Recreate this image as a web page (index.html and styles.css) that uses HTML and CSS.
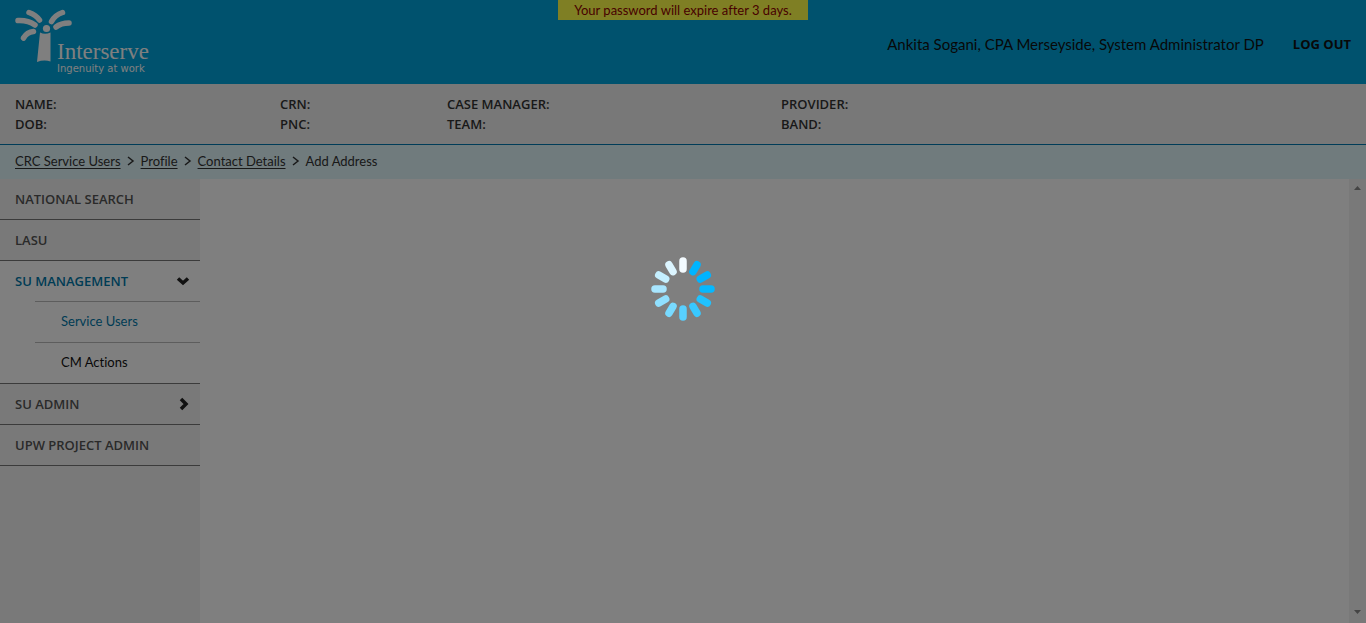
FILE: index.html
```html
<!DOCTYPE html>
<html lang="en">
<head>
<meta charset="utf-8">
<meta name="viewport" content="width=device-width, initial-scale=1">
<title>Add Address</title>
<link rel="stylesheet" href="styles.css">
</head>
<body>
<div class="app">
  <header class="header">
    <a class="logo" href="#" aria-label="Interserve home">
      <svg class="logo-art" viewBox="0 0 140 68" aria-hidden="true">
        <g fill="none" stroke="currentColor" stroke-width="5.5" stroke-linecap="round">
          <path d="M14 4.500Q21 7 24.500 12"/>
          <path d="M3 12.500Q13 12 20 17"/>
          <path d="M8.500 30Q12 24 18.500 23.500"/>
          <path d="M36.500 13.500Q40 7 47.500 4.500"/>
          <path d="M41 19Q46 15 54 15"/>
        </g>
        <circle cx="31.500" cy="20.500" r="3.600" fill="currentColor"/>
        <path d="M25 24.500Q30 27 35.500 24.500V53.500Q29 51.500 22 54Z" fill="currentColor"/>
        <text class="logo-name" x="42" y="51">Interserve</text>
        <text class="logo-tag" x="42" y="64">Ingenuity at work</text>
      </svg>
    </a>
    <div class="notice" role="status">Your password will expire after 3 days.</div>
    <div class="account">
      <span>Ankita Sogani, CPA Merseyside, System Administrator DP</span>
      <button class="logout" type="button">LOG OUT</button>
    </div>
  </header>

  <section class="summary" aria-label="Service user">
    <div><p>NAME:</p><p>DOB:</p></div>
    <div><p>CRN:</p><p>PNC:</p></div>
    <div><p>CASE MANAGER:</p><p>TEAM:</p></div>
    <div><p>PROVIDER:</p><p>BAND:</p></div>
  </section>

  <nav class="crumbs" aria-label="Breadcrumb">
    <a href="#">CRC Service Users</a>
    <svg class="crumb-sep" viewBox="0 0 8 10"><path d="M1 1L6 5L1 9"/></svg>
    <a href="#">Profile</a>
    <svg class="crumb-sep" viewBox="0 0 8 10"><path d="M1 1L6 5L1 9"/></svg>
    <a href="#">Contact Details</a>
    <svg class="crumb-sep" viewBox="0 0 8 10"><path d="M1 1L6 5L1 9"/></svg>
    <span>Add Address</span>
  </nav>

  <div class="body">
    <nav class="side" aria-label="Main">
      <a class="item" href="#">NATIONAL SEARCH</a>
      <a class="item" href="#">LASU</a>
      <div class="group">
        <a class="item item-open" href="#">SU MANAGEMENT
          <svg class="arrow" viewBox="0 0 14 14"><path d="M2 4.500L7 9L12 4.500"/></svg>
        </a>
        <a class="sub sub-current" href="#">Service Users</a>
        <a class="sub" href="#">CM Actions</a>
      </div>
      <a class="item" href="#">SU ADMIN
        <svg class="arrow" viewBox="0 0 14 14"><path d="M5 2L10 7L5 12"/></svg>
      </a>
      <a class="item" href="#">UPW PROJECT ADMIN</a>
    </nav>
    <main class="content"></main>
    <div class="scroll" aria-hidden="true">
      <svg class="scroll-arrow" viewBox="0 0 7 4"><path d="M0 4L3.500 0L7 4Z"/></svg>
      <svg class="scroll-arrow" viewBox="0 0 7 4"><path d="M0 0L3.500 4L7 0Z"/></svg>
    </div>
  </div>
</div>

<div class="overlay" role="alert" aria-label="Loading">
  <svg class="spinner" viewBox="-32 -32 64 64" fill="none" stroke-width="7.500" stroke-linecap="round">
    <path stroke="#f4fbff" d="M0 -28V-20"/>
    <path stroke="#00b4ff" d="M0 -28V-20" transform="rotate(30)"/>
    <path stroke="#00b4ff" d="M0 -28V-20" transform="rotate(60)"/>
    <path stroke="#05b8ff" d="M0 -28V-20" transform="rotate(90)"/>
    <path stroke="#20c2ff" d="M0 -28V-20" transform="rotate(120)"/>
    <path stroke="#38c8ff" d="M0 -28V-20" transform="rotate(150)"/>
    <path stroke="#58d0ff" d="M0 -28V-20" transform="rotate(180)"/>
    <path stroke="#78daff" d="M0 -28V-20" transform="rotate(210)"/>
    <path stroke="#90e0ff" d="M0 -28V-20" transform="rotate(240)"/>
    <path stroke="#a8e6ff" d="M0 -28V-20" transform="rotate(270)"/>
    <path stroke="#c4efff" d="M0 -28V-20" transform="rotate(300)"/>
    <path stroke="#dcf5ff" d="M0 -28V-20" transform="rotate(330)"/>
  </svg>
</div>
</body>
</html>
```
FILE: styles.css
```css
* { box-sizing: border-box; }

body {
  margin: 0;
  font-family: "Trebuchet MS", Lato, sans-serif;
  font-size: 13px;
  font-variant-ligatures: none;
  line-height: 20px;
  color: #333;
}

p { margin: 0; }

.app {
  display: flex;
  flex-direction: column;
  min-height: 100vh;
}

.header {
  display: grid;
  grid-template-columns: 1fr auto 1fr;
  min-height: 84px;
  padding: 0 15px;
  background: #00a4dc;
  color: #111;
}

.logo {
  padding-top: 8px;
  color: #fff;
  width: 140px;
}

.logo-art { display: block; width: 140px; height: 68px; }
.logo-name { font-family: "Liberation Serif", serif; font-size: 23px; fill: currentColor; }
.logo-tag { font-family: "DejaVu Sans", sans-serif; font-size: 10px; fill: currentColor; }

.notice {
  align-self: start;
  padding: 0 16px;
  background: #ffff48;
  color: #900000;
}

.account {
  display: flex;
  justify-content: flex-end;
  align-items: center;
  gap: 29px;
  padding-top: 4px;
  font-size: 15px;
  white-space: nowrap;
}

.logout {
  padding: 0;
  border: 0;
  background: none;
  color: inherit;
  font: inherit;
  font-family: "Trebuchet MS", "Open Sans", sans-serif;
  font-size: 13px;
  font-weight: 700;
}

.summary {
  display: grid;
  grid-template-columns: 265fr 167fr 334fr 570fr;
  padding: 10px 15px;
  background: #f0f0f0;
  border-bottom: 1px solid #0078b0;
  font-family: "Trebuchet MS", "Open Sans", sans-serif;
  font-weight: 600;
}

.crumbs {
  display: flex;
  align-items: center;
  gap: 6px;
  padding: 6px 15px 8px;
  background: #e0f6fa;
}

.crumbs a { color: inherit; text-underline-offset: 2px; }

.crumb-sep {
  width: 8px;
  height: 10px;
  fill: none;
  stroke: #333;
  stroke-width: 1.5;
}

.body {
  display: flex;
  flex: 1;
  background: #fff;
}

.side {
  flex: 0 0 200px;
  background: #f3f3f3;
}

.item {
  display: flex;
  justify-content: space-between;
  align-items: center;
  padding: 10px 10px 10px 15px;
  border-bottom: 1px solid #777;
  color: #555;
  font-family: "Trebuchet MS", "Open Sans", sans-serif;
  font-weight: 600;
  text-decoration: none;
}

.group {
  background: #fff;
  border-bottom: 1px solid #777;
}

.item-open { border: 0; color: #0078aa; }

.arrow {
  width: 14px;
  height: 14px;
  fill: none;
  stroke: #222;
  stroke-width: 3.5;
}

.sub {
  display: block;
  margin-left: 35px;
  padding: 9px 0 11px 26px;
  border-top: 1px solid #bbb;
  color: #111;
  text-decoration: none;
}

.sub-current { color: #0078aa; }

.content { flex: 1; }

.scroll {
  display: flex;
  flex-direction: column;
  justify-content: space-between;
  align-items: center;
  width: 17px;
  padding: 7px 0 9px;
  background: #f3f3f3;
}

.scroll-arrow { width: 7px; height: 4px; fill: #888; }

.overlay {
  position: fixed;
  inset: 0;
  background: rgba(0, 0, 0, 0.5);
}

.spinner {
  display: block;
  width: 64px;
  height: 64px;
  margin: 257px auto 0;
}
```
